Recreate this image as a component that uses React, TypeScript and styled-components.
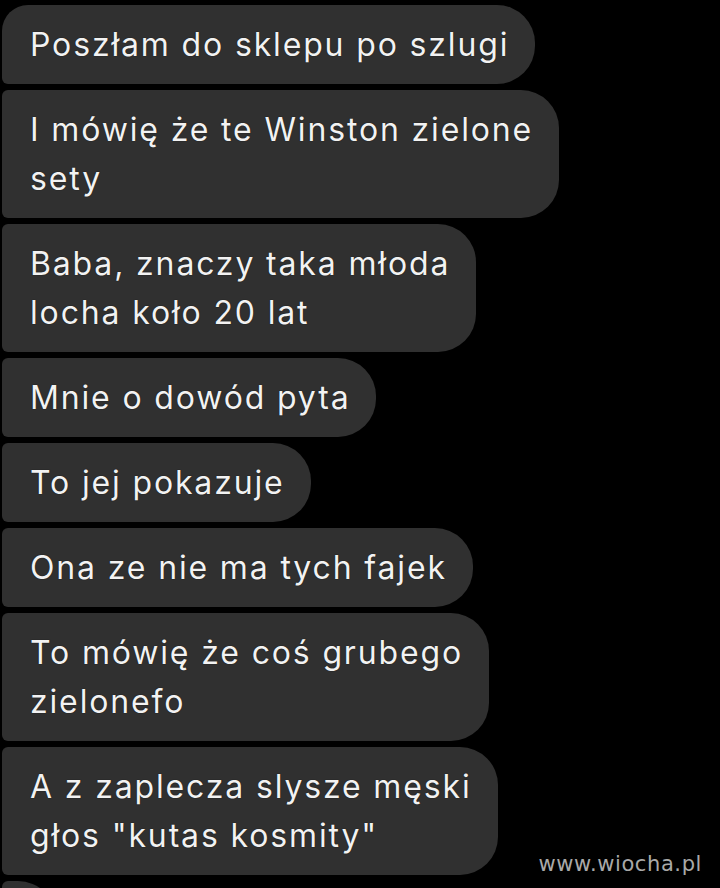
import React from "react";
import styled, { createGlobalStyle } from "styled-components";

const GlobalStyle = createGlobalStyle`
  html, body {
    margin: 0;
    padding: 0;
    background: #000;
  }
  body {
    width: 720px;
    height: 888px;
    overflow: hidden;
  }
`;

const Screen = styled.main`
  position: relative;
  width: 720px;
  height: 888px;
  overflow: hidden;
  background: #000;
  font-family: Inter, Roboto, "Liberation Sans", Arial, sans-serif;
`;

const Thread = styled.div`
  display: flex;
  flex-direction: column;
  align-items: flex-start;
  gap: 6px;
  padding: 5px 0 0 2px;
`;

const Bubble = styled.div<{ $first?: boolean }>`
  box-sizing: border-box;
  background: #303030;
  color: #f2f2f2;
  font-size: 32px;
  letter-spacing: 1.85px;
  line-height: 49px;
  padding: 15px 26px 15px 28px;
  white-space: nowrap;
  min-height: 79px;
  border-radius: ${(p) => (p.$first ? "26px" : "6px")} 38px 38px 6px;
  text-shadow: 0 0 1px #000;
`;

const Watermark = styled.div`
  position: absolute;
  right: 18px;
  bottom: 12px;
  font-family: "DejaVu Sans", Verdana, sans-serif;
  font-size: 21px;
  letter-spacing: 0.6px;
  color: #a9a9a9;
  text-shadow: 1px 1px 1px #000;
`;

const messages: string[][] = [
  ["Poszłam do sklepu po szlugi"],
  ["I mówię że te Winston zielone", "sety"],
  ["Baba, znaczy taka młoda", "locha koło 20 lat"],
  ["Mnie o dowód pyta"],
  ["To jej pokazuje"],
  ["Ona ze nie ma tych fajek"],
  ["To mówię że coś grubego", "zielonefo"],
  ["A z zaplecza slysze męski", "głos \"kutas kosmity\""],
  [""],
];

export default function App() {
  return (
    <Screen>
      <GlobalStyle />
      <Thread>
        {messages.map((lines, i) => (
          <Bubble key={i} $first={i === 0}>
            {lines.map((l, j) => (
              <React.Fragment key={j}>
                {j > 0 && <br />}
                {l}
              </React.Fragment>
            ))}
          </Bubble>
        ))}
      </Thread>
      <Watermark>www.wiocha.pl</Watermark>
    </Screen>
  );
}
